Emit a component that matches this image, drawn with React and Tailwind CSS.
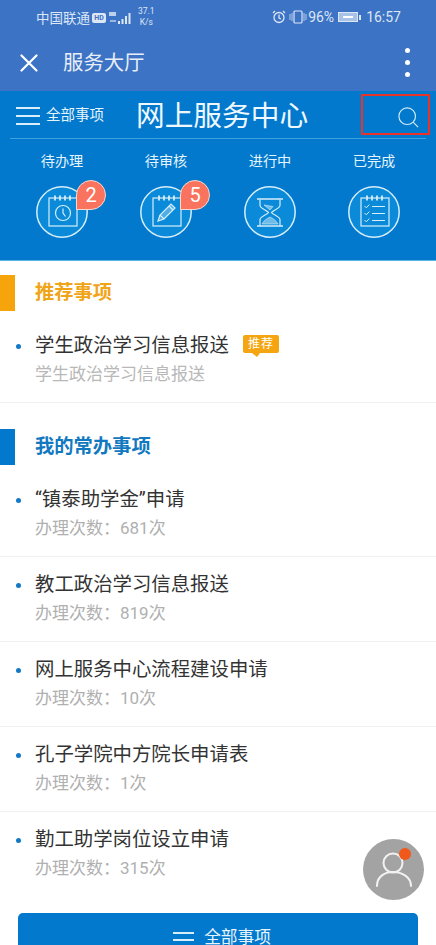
import React from "react";

const FONT = "font-['Roboto','Noto_Sans_CJK_SC',sans-serif]";

const Notepad = ({ children }) => (
  <svg viewBox="0 0 52 52" className="w-[52px] h-[52px]" fill="none" stroke="#d6eefa" strokeWidth="1.2">
    <circle cx="26" cy="26" r="25.2" strokeWidth="1.5" fill="#0a8ad8" />
    <rect x="13" y="12" width="28" height="28" />
    <path d="M19 9.5v5M24 9.5v5M29 9.5v5M34 9.5v5" strokeWidth="1.8" />
    {children}
  </svg>
);

const ClockIcon = () => (
  <Notepad>
    <circle cx="27" cy="27" r="7.5" />
    <path d="M27 22.5V27l2.5 3.5" />
  </Notepad>
);

const PencilIcon = () => (
  <Notepad>
    <path d="M18 35l2-6 11-11 4 4-11 11z" fill="#d6eefa" fillOpacity="0.35" />
    <path d="M20 29l4 4M29 20l4 4" />
  </Notepad>
);

const HourglassIcon = () => (
  <svg viewBox="0 0 52 52" className="w-[52px] h-[52px]" fill="none" stroke="#d6eefa" strokeWidth="1.2">
    <circle cx="26" cy="26" r="25.2" strokeWidth="1.5" fill="#0a8ad8" />
    <path d="M13 13h26M13 40h26" strokeWidth="1.6" />
    <path d="M16 13.5v6c0 3 7.5 5 8.5 7-1 2-8.5 4-8.5 7V40M36 13.5v6c0 3-7.5 5-8.5 7 1 2 8.5 4 8.5 7V40" />
    <path d="M20 19l9 1.5-3 3.5zM18 38c2-4 6-6 8-7 2 1 6 3 8 7z" fill="#d6eefa" fillOpacity="0.5" strokeWidth="0.6" />
  </svg>
);

const ChecklistIcon = () => (
  <Notepad>
    <path d="M16.5 20l1.8 1.8 3-3.2M16.5 27l1.8 1.8 3-3.2M16.5 34l1.8 1.8 3-3.2" strokeWidth="1" />
    <path d="M24 20.5h13M24 27.5h13M24 34.5h13" />
  </Notepad>
);

const Badge = ({ n }) => (
  <div className="absolute left-[40px] -top-[6px] w-[30px] h-[30px] rounded-full rounded-bl-none bg-[#f9735f] border border-[#f6d9cf] flex items-center justify-center text-white text-[20px] leading-none">
    {n}
  </div>
);

const tabs = [
  { label: "待办理", icon: <ClockIcon />, badge: 2 },
  { label: "待审核", icon: <PencilIcon />, badge: 5 },
  { label: "进行中", icon: <HourglassIcon /> },
  { label: "已完成", icon: <ChecklistIcon /> },
];

const items = [
  { title: "\u201C镇泰助学金\u201D申请", count: "681" },
  { title: "教工政治学习信息报送", count: "819" },
  { title: "网上服务中心流程建设申请", count: "10" },
  { title: "孔子学院中方院长申请表", count: "1" },
  { title: "勤工助学岗位设立申请", count: "315" },
];

const Row = ({ title, sub, last }) => (
  <div className={`h-[85px] pl-[16px] pt-[14px] ${last ? "" : "border-b border-[#f1f1f1]"}`}>
    <div className="flex items-center h-[28px]">
      <span className="w-[5px] h-[5px] rounded-full bg-[#1279c6] mr-[14px]" />
      <span className="text-[19.4px] leading-[28px] text-[#333]">{title}</span>
    </div>
    <div className="ml-[19px] mt-[1px] text-[17px] leading-[26px] text-[#b0b0b0]">{sub}</div>
  </div>
);

const SectionTitle = ({ text, bar, color }) => (
  <div className="flex items-center h-[36px]">
    <div className={`w-[15px] h-full ${bar}`} />
    <span className={`ml-[20px] text-[19.3px] font-bold ${color}`}>{text}</span>
  </div>
);

const TagBubble = () => (
  <div className="relative ml-[14px] -mt-[5px] w-[36px] h-[18px] rounded-[2px] bg-[#f5a511] flex items-center justify-center text-white text-[12px] leading-none tracking-[1px]">
    推荐
    <span className="absolute left-[9px] -bottom-[4px] w-0 h-0 border-l-[5px] border-r-[3px] border-t-[4px] border-l-transparent border-r-transparent border-t-[#f5a511]" />
  </div>
);

const App = () => (
  <div className={`relative w-[436px] h-[945px] overflow-hidden bg-white ${FONT}`}>
    {/* status bar */}
    <div className="h-[34px] bg-[#3c73c4] flex items-center text-[#dce6f5] pl-[36px] pr-[35px] text-[13.5px]">
      <span className="mt-[2px]">中国联通</span>
      <span className="ml-[2px] mt-[1px] w-[14px] h-[10px] rounded-[2px] bg-[#dce6f5] text-[#3c73c4] text-[7px] font-bold leading-[10px] text-center">HD</span>
      <svg viewBox="0 0 24 14" className="ml-[3px] mt-[1px] w-[24px] h-[14px]" fill="#dce6f5">
        <rect x="0" y="1" width="7" height="4" opacity="0.8" />
        <rect x="1" y="9" width="6" height="2" opacity="0.6" />
        <rect x="9" y="10" width="2" height="3" />
        <rect x="12.5" y="8" width="2" height="5" />
        <rect x="16" y="5" width="2" height="8" />
        <rect x="19.5" y="2" width="2" height="11" />
      </svg>
      <div className="ml-[5px] text-[8.5px] leading-[11px] text-center">37.1<br />K/s</div>
      <div className="flex-1" />
      <svg viewBox="0 0 14 14" className="w-[14px] h-[14px]" fill="none" stroke="#dce6f5" strokeWidth="1.3">
        <circle cx="7" cy="7.5" r="5" />
        <path d="M7 4.5V8l2 1M1 3l2-2M13 3l-2-2" />
      </svg>
      <svg viewBox="0 0 18 14" className="ml-[3px] w-[18px] h-[14px]" fill="none" stroke="#dce6f5" strokeWidth="1.2">
        <rect x="5" y="1" width="8" height="12" rx="1" />
        <path d="M1 4v6M3 3v8M15 3v8M17 4v6" strokeWidth="0.8" />
      </svg>
      <span className="ml-[1px] text-[14px]">96%</span>
      <div className="ml-[4px] w-[20px] h-[10px] border border-[#dce6f5] bg-[#a9c3e8] flex items-center justify-center">
        <div className="w-[10px] h-[2px] bg-white" />
      </div>
      <div className="w-[2px] h-[5px] bg-[#dce6f5] ml-[1px]" />
      <span className="ml-[5px] text-[14px]">16:57</span>
    </div>

    {/* title bar */}
    <div className="h-[57px] bg-[#3c73c4] flex items-center text-white">
      <svg viewBox="0 0 18 18" className="ml-[20px] w-[18px] h-[18px]" stroke="#fff" strokeWidth="2.2" strokeLinecap="round">
        <path d="M1.5 1.5l15 15M16.5 1.5l-15 15" />
      </svg>
      <span className="ml-[25px] mt-[2px] text-[20.4px] text-[#e8eef8]">服务大厅</span>
      <div className="flex-1" />
      <div className="mr-[26px] flex flex-col gap-[7px]">
        <span className="w-[5px] h-[5px] rounded-full bg-white" />
        <span className="w-[5px] h-[5px] rounded-full bg-white" />
        <span className="w-[5px] h-[5px] rounded-full bg-white" />
      </div>
    </div>

    {/* blue header */}
    <div className="relative h-[170px] bg-[#0279cd] border-b border-[#5cb4e4] text-white">
      <div className="mx-[10px] h-[48px] border-b border-[#3fa2df] flex items-center">
        <div className="ml-[6px] mt-[2px] w-[24px] flex flex-col gap-[6px]">
          <span className="h-[2px] bg-[#d6eefa]" />
          <span className="h-[2px] bg-[#d6eefa]" />
          <span className="h-[2px] bg-[#d6eefa]" />
        </div>
        <span className="ml-[6px] mt-[3px] text-[14.5px] text-[#e6f4fc]">全部事项</span>
        <span className="ml-[32px] mt-[3px] text-[28.7px] leading-none text-[#eef8fe]">网上服务中心</span>
        <div className="flex-1" />
        <svg viewBox="0 0 24 24" className="mr-[7px] mt-[5px] w-[21px] h-[21px]" fill="none" stroke="#d6eefa" strokeWidth="1.3">
          <circle cx="10.5" cy="10.5" r="9.5" />
          <path d="M17.5 17.5l5.5 5.5" />
        </svg>
      </div>
      <div className="mx-[10px] grid grid-cols-4">
        {tabs.map(t => (
          <div key={t.label} className="flex flex-col items-center">
            <span className="mt-[11px] text-[14.2px] leading-[22px] text-[#e6f4fc]">{t.label}</span>
            <div className="relative mt-[14px]">
              {t.icon}
              {t.badge && <Badge n={t.badge} />}
            </div>
          </div>
        ))}
      </div>
      {/* red annotation box */}
      <div className="absolute left-[361px] top-[3px] w-[69px] h-[41px] border-2 border-[#e8332a]" />
    </div>

    {/* list */}
    <div className="pt-[14px]">
      <SectionTitle text="推荐事项" bar="bg-[#f5a50b]" color="text-[#f0a418]" />
      <div className="h-[92px] pl-[16px] pt-[21px] border-b border-[#f1f1f1]">
        <div className="flex items-center h-[28px]">
          <span className="w-[5px] h-[5px] rounded-full bg-[#1279c6] mr-[14px]" />
          <span className="text-[19.4px] leading-[28px] text-[#333]">学生政治学习信息报送</span>
          <TagBubble />
        </div>
        <div className="ml-[19px] mt-[1px] text-[17px] leading-[26px] text-[#b8b8b8]">学生政治学习信息报送</div>
      </div>
      <div className="h-[26px]" />
      <SectionTitle text="我的常办事项" bar="bg-[#0279cd]" color="text-[#1279c0]" />
      <div className="h-[7px]" />
      {items.map((it, i) => (
        <Row key={it.title} title={it.title} sub={`办理次数：${it.count}次`} last={i === items.length - 1} />
      ))}
    </div>

    {/* floating avatar */}
    <div className="absolute left-[363px] top-[839px] w-[61px] h-[61px] rounded-full bg-[#a3a3a3] flex items-center justify-center">
      <svg viewBox="0 0 61 61" className="w-[61px] h-[61px]" fill="none" stroke="#f2f2f2" strokeWidth="2" strokeLinecap="round">
        <circle cx="30" cy="24" r="9.5" />
        <path d="M14 47c0-9 7-14 16-14s18 5 18 14" />
      </svg>
      <span className="absolute left-[36px] top-[9px] w-[12px] h-[12px] rounded-full bg-[#f0591a]" />
    </div>

    {/* bottom button */}
    <div className="absolute left-[18px] top-[913px] w-[400px] h-[48px] rounded-t-[5px] bg-[#0279cd] flex items-center justify-center pl-[8px] text-[#e6f4fc]">
      <div className="w-[21px] mt-[6px] flex flex-col gap-[5.5px] mr-[10px]">
        <span className="h-[1.5px] bg-[#d6eefa]" />
        <span className="h-[1.5px] bg-[#d6eefa]" />
        <span className="h-[1.5px] bg-[#d6eefa]" />
      </div>
      <span className="mt-[2px] text-[16.7px] leading-none">全部事项</span>
    </div>
  </div>
);

export default App;
